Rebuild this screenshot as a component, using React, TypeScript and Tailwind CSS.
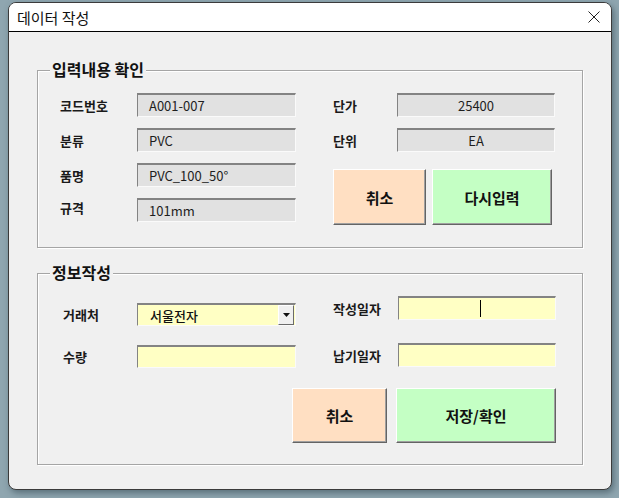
import React from "react";

const FONT = "font-['Noto_Sans_CJK_KR','Malgun_Gothic',sans-serif]";

// 회색(읽기전용) / 노랑(입력) 텍스트박스 — 움푹 들어간 테두리
function Field({
  value,
  w,
  h = 24,
  yellow,
  center,
  caret,
}: {
  value?: string;
  w: string;
  h?: number;
  yellow?: boolean;
  center?: boolean;
  caret?: boolean;
}) {
  return (
    <div
      className={`flex items-center border-t-2 border-l border-b border-r border-t-[#838383] border-l-[#838383] border-b-[#fafafa] border-r-[#fafafa] text-[13px] leading-none text-[#1e1e1e] ${w} ${
        h === 23 ? "h-[23px]" : "h-[24px]"
      } ${yellow ? "bg-[#ffffc4]" : "bg-[#e1e1e1]"} ${center ? "justify-center" : "pl-[11px]"}`}
    >
      {value}
      {caret && <span className="ml-[70px] h-[17px] w-px bg-black" />}
    </div>
  );
}

function Btn({ label, w, h, green }: { label: string; w: string; h: string; green?: boolean }) {
  return (
    <button
      className={`flex items-center justify-center border border-t-white border-l-white border-b-[#646464] border-r-[#646464] shadow-[inset_-1px_-1px_0_#a0a0a0] text-[15px] font-bold leading-none text-[#111] ${w} ${h} ${
        green ? "bg-[#c4ffc4]" : "bg-[#ffdfc2]"
      }`}
    >
      {label}
    </button>
  );
}

function Label({ text, w, up }: { text: string; w: string; up?: boolean }) {
  return (
    <span className={`text-[13px] font-bold leading-none text-[#1a1a1a] ${w} ${up ? "-mt-[5px]" : ""}`}>
      {text}
    </span>
  );
}

function Group({ title, h, children }: { title: string; h: string; children: React.ReactNode }) {
  return (
    <div
      className={`relative ml-[28px] w-[546px] border border-[#a5a5a5] shadow-[inset_1px_1px_0_#fff,1px_1px_0_#fff] ${h}`}
    >
      <span className="absolute -top-[10px] left-[12px] bg-[#f0f0f0] px-[2px] text-[16px] font-bold leading-none text-[#111]">
        {title}
      </span>
      {children}
    </div>
  );
}

export default function App() {
  return (
    <div className={`h-[498px] w-[619px] bg-[#8fa6b0] pl-[8px] pt-[2px] ${FONT}`}>
      <div className="flex h-[488px] w-[604px] flex-col overflow-hidden rounded-[8px] border border-[#3b3b3b] bg-[#f0f0f0] shadow-[2px_3px_6px_rgba(40,60,70,0.5)]">
        {/* 타이틀바 */}
        <div className="flex h-[29px] shrink-0 items-center justify-between border-b border-black bg-white pl-[8px] pr-[10px]">
          <span className="text-[15px] leading-none text-[#111]">데이터 작성</span>
          <svg width="12" height="12" viewBox="0 0 12 12" className="mr-[1px]">
            <path d="M0.5 0.5 L11.5 11.5 M11.5 0.5 L0.5 11.5" stroke="#222" strokeWidth="1" />
          </svg>
        </div>

        <div className="flex flex-col pt-[38px]">
          {/* 입력내용 확인 */}
          <Group title="입력내용 확인" h="h-[178px]">
            <div className="flex pl-[22px] pt-[22px]">
              <div className="flex flex-col gap-[11px]">
                {[
                  ["코드번호", "A001-007"],
                  ["분류", "PVC"],
                  ["품명", "PVC_100_50°"],
                  ["규격", "101mm"],
                ].map(([l, v]) => (
                  <div key={l} className="flex items-center">
                    <Label text={l} w="w-[77px]" up={l === "규격"} />
                    <Field value={v} w="w-[159px]" />
                  </div>
                ))}
              </div>
              <div className="ml-[37px] flex flex-col gap-[11px]">
                <div className="flex items-center">
                  <Label text="단가" w="w-[64px]" />
                  <Field value="25400" w="w-[158px]" center />
                </div>
                <div className="flex items-center">
                  <Label text="단위" w="w-[64px]" />
                  <Field value="EA" w="w-[158px]" center />
                </div>
                <div className="mt-[6px] flex gap-[6px]">
                  <Btn label="취소" w="w-[93px]" h="h-[56px]" />
                  <Btn label="다시입력" w="w-[120px]" h="h-[56px]" green />
                </div>
              </div>
            </div>
          </Group>

          <div className="h-[25px]" />

          {/* 정보작성 */}
          <Group title="정보작성" h="h-[192px]">
            <div className="flex flex-col pt-[22px]">
              <div className="flex">
                <div className="flex flex-col gap-[19px] pl-[25px] pt-[7px]">
                  <div className="flex items-center">
                    <Label text="거래처" w="w-[74px]" />
                    <div className="flex h-[23px] w-[159px] items-center justify-between border-t-2 border-l border-b border-r border-t-[#838383] border-l-[#838383] border-b-[#fafafa] border-r-[#fafafa] bg-[#ffffc4] pl-[12px]">
                      <span className="text-[13px] font-medium leading-none text-[#111]">서울전자</span>
                      <div className="mr-[1px] flex h-[20px] w-[16px] items-center justify-center border border-t-white border-l-white border-b-[#6a6a6a] border-r-[#6a6a6a] bg-[#f0f0f0]">
                        <svg width="7" height="4" viewBox="0 0 7 4">
                          <path d="M0 0 H7 L3.5 4 Z" fill="#111" />
                        </svg>
                      </div>
                    </div>
                  </div>
                  <div className="flex items-center">
                    <Label text="수량" w="w-[74px]" />
                    <Field w="w-[159px]" h={23} yellow />
                  </div>
                </div>
                <div className="ml-[37px] flex flex-col gap-[23px]">
                  <div className="flex items-center">
                    <Label text="작성일자" w="w-[65px]" />
                    <Field w="w-[158px]" yellow caret />
                  </div>
                  <div className="flex items-center">
                    <Label text="납기일자" w="w-[65px]" />
                    <Field w="w-[158px]" yellow />
                  </div>
                </div>
              </div>
              <div className="mt-[20px] flex gap-[9px] pl-[254px]">
                <Btn label="취소" w="w-[95px]" h="h-[55px]" />
                <Btn label="저장/확인" w="w-[160px]" h="h-[55px]" green />
              </div>
            </div>
          </Group>
        </div>
      </div>
    </div>
  );
}
